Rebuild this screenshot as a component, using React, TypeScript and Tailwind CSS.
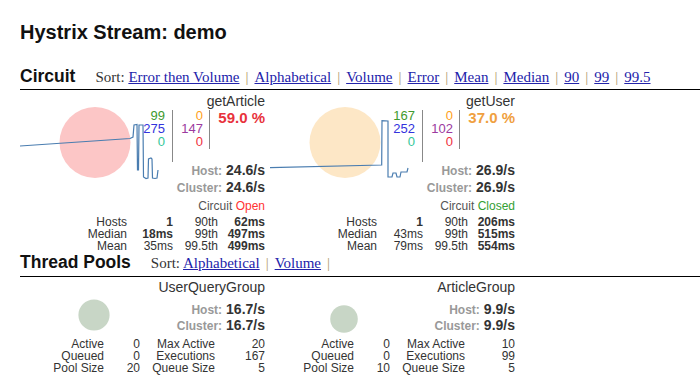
import React from "react";

type Circuit = {
  name: string;
  counts: [number, number, number, number, number, number];
  err: string;
  errColor: string;
  host: string;
  cluster: string;
  open: boolean;
  stats: [string, string, boolean, string, string][];
  circle: string;
  spark: string;
};

const circuits: Circuit[] = [
  {
    name: "getArticle",
    counts: [99, 275, 0, 0, 147, 0],
    err: "59.0 %",
    errColor: "#e8323c",
    host: "24.6/s",
    cluster: "24.6/s",
    open: true,
    stats: [
      ["Hosts", "1", true, "90th", "62ms"],
      ["Median", "18ms", true, "99th", "497ms"],
      ["Mean", "35ms", false, "99.5th", "499ms"],
    ],
    circle: "#fcc6c6",
    spark:
      "M0,56 L110,48.5 L113,47 L114,35 L117,34.5 L117.5,80 L118.5,80 L119,35 L123,35 L123.5,87 L126,88.5 L128,88 L128.5,69 L131,68 L132,69 L132.5,88 L135,88.5 L137,88 L138,80",
  },
  {
    name: "getUser",
    counts: [167, 252, 0, 0, 102, 0],
    err: "37.0 %",
    errColor: "#f0a040",
    host: "26.9/s",
    cluster: "26.9/s",
    open: false,
    stats: [
      ["Hosts", "1", true, "90th", "206ms"],
      ["Median", "43ms", false, "99th", "515ms"],
      ["Mean", "79ms", false, "99.5th", "554ms"],
    ],
    circle: "#fde7c6",
    spark:
      "M0,77.7 L111.7,75 L112,30.7 L118,31 L118,87 L122,87 L123,83 L126,83 L127,87 L130,87 L131,82 L137,82 L138,78",
  },
];

const pools = [
  { name: "UserQueryGroup", host: "16.7/s", cluster: "16.7/s", r: 15.6, cy: 38, rows: [["Active", "0", "Max Active", "20"], ["Queued", "0", "Executions", "167"], ["Pool Size", "20", "Queue Size", "5"]] },
  { name: "ArticleGroup", host: "9.9/s", cluster: "9.9/s", r: 13.8, cy: 42, rows: [["Active", "0", "Max Active", "10"], ["Queued", "0", "Executions", "99"], ["Pool Size", "10", "Queue Size", "5"]] },
];

function Rate({ label, value }: { label: string; value: string }) {
  return (
    <div className="flex h-[16.5px] items-baseline justify-end text-[14px] leading-[16.5px]">
      <span className="text-[12px] font-bold leading-[12px] text-[#999]">{label}:</span>
      <span className="ml-[4px] font-bold text-[#333]">{value}</span>
    </div>
  );
}

function Sort({ links, trailing }: { links: string[]; trailing?: boolean }) {
  return (
    <div className="ml-[20px] font-['Liberation_Serif','Times_New_Roman',serif] text-[15px] leading-[17px] text-[#333]">
      Sort:{" "}
      {links.map((l, i) => (
        <React.Fragment key={l}>
          <a href="#" className="text-[#2222aa] underline">
            {l}
          </a>
          {(i < links.length - 1 || trailing) && <span className="mx-[6px] text-[#b09a6a]">|</span>}
        </React.Fragment>
      ))}
    </div>
  );
}

function CircuitCard({ c }: { c: Circuit }) {
  const colors = ["#3f9a2e", "#3333dd", "#33c799"];
  const colors2 = ["#ff9f1a", "#9c3aa0", "#f03040"];
  return (
    <div className="relative h-[161.5px] w-[250px] pt-[4px] pr-[5px]">
      <svg className="absolute left-0 top-0" width="250" height="170">
        <circle cx="75" cy="52.5" r="35.5" fill={c.circle} />
        <path d={c.spark} fill="none" stroke="#4a7db0" strokeWidth="1.2" />
      </svg>
      <div className="relative">
        <div className="h-[15px] text-right text-[14px] leading-[15px] text-[#333]">{c.name}</div>
        <div className="flex h-[53px] pl-[115px] text-[13px] leading-[13px]">
          <div className="w-[30px] text-right">
            {c.counts.slice(0, 3).map((n, i) => (
              <div key={i} style={{ color: colors[i] }}>{n}</div>
            ))}
          </div>
          <div className="ml-[7px] mt-[1px] h-[52px] w-px bg-[#888]" />
          <div className="w-[30px] text-right">
            {c.counts.slice(3).map((n, i) => (
              <div key={i} style={{ color: colors2[i] }}>{n}</div>
            ))}
          </div>
          <div className="ml-[6px] mt-[1px] h-[39px] w-px bg-[#888]" />
          <div className="ml-[6px] mt-[1px] flex-1 text-right text-[15px] font-bold leading-[15px]" style={{ color: c.errColor }}>
            {c.err}
          </div>
        </div>
        <Rate label="Host" value={c.host} />
        <Rate label="Cluster" value={c.cluster} />
        <div className="mt-[3.5px] h-[14px] text-right text-[12px] leading-[14px] text-[#555]">
          Circuit{" "}
          {c.open ? <span className="text-[#ff3333]">Open</span> : <span className="text-[#33a033]">Closed</span>}
        </div>
        <div className="mt-[3px] grid grid-cols-[107px_46px_45px_47px] grid-rows-[12px_12px_12px] text-right text-[12px] leading-[12px] text-[#333]">
          {c.stats.map(([a, b, bold, d, e]) => (
            <React.Fragment key={a}>
              <div>{a}</div>
              <div className={bold ? "font-bold" : ""}>{b}</div>
              <div>{d}</div>
              <div className="font-bold">{e}</div>
            </React.Fragment>
          ))}
        </div>
      </div>
    </div>
  );
}

function PoolCard({ p }: { p: (typeof pools)[number] }) {
  return (
    <div className="relative w-[250px] pt-[3px] pr-[5px]">
      <svg className="absolute left-0 top-0" width="250" height="70">
        <circle cx="74" cy={p.cy} r={p.r} fill="#c8d6c6" />
      </svg>
      <div className="relative">
        <div className="h-[15px] text-right text-[14px] leading-[15px] text-[#333]">{p.name}</div>
        <div className="mt-[6px]">
          <Rate label="Host" value={p.host} />
          <Rate label="Cluster" value={p.cluster} />
        </div>
        <div className="mt-[4px] grid grid-cols-[84px_36px_75px_50px] grid-rows-[12px_12px_12px] text-right text-[12px] leading-[12px] text-[#333]">
          {p.rows.map((r) => (
            <React.Fragment key={r[0]}>
              {r.map((v, i) => (
                <div key={i}>{v}</div>
              ))}
            </React.Fragment>
          ))}
        </div>
      </div>
    </div>
  );
}

export default function App() {
  return (
    <div className="min-h-[392px] bg-white pl-[20px] pt-[21px] font-['Liberation_Sans',Arial,sans-serif] text-[#333]">
      <h1 className="h-[23px] text-[20px] font-bold leading-[23px] text-[#111]">Hystrix Stream: demo</h1>

      <div className="mt-[22px] flex h-[24px] items-baseline border-b border-black pb-[3px]">
        <h2 className="text-[17.5px] font-bold leading-[20px] text-[#111]">Circuit</h2>
        <Sort links={["Error then Volume", "Alphabetical", "Volume", "Error", "Mean", "Median", "90", "99", "99.5"]} />
      </div>
      <div className="flex">
        {circuits.map((c) => (
          <CircuitCard key={c.name} c={c} />
        ))}
      </div>

      <div className="flex h-[25px] items-baseline border-b border-black">
        <h2 className="text-[17.5px] font-bold leading-[20px] text-[#111]">Thread Pools</h2>
        <Sort links={["Alphabetical", "Volume"]} trailing />
      </div>
      <div className="flex">
        {pools.map((p) => (
          <PoolCard key={p.name} p={p} />
        ))}
      </div>
    </div>
  );
}
